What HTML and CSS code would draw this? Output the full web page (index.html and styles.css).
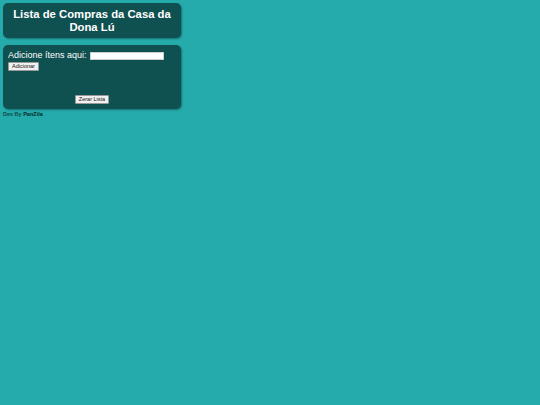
FILE: index.html
```html
<!DOCTYPE html>
<html lang="pt-BR">
<head>
<meta charset="utf-8">
<title>Lista de Compras</title>
<link rel="stylesheet" href="styles.css">
</head>
<body>
<header class="card header">
  <h1 class="title">Lista de Compras da Casa da Dona Lú</h1>
</header>
<main class="card panel">
  <div class="add-row">
    <label class="label" for="item">Adicione ítens aqui:</label>
    <input class="field" id="item" type="text">
  </div>
  <button class="btn">Adicionar</button>
  <ul class="list"></ul>
  <div class="reset-row"><button class="btn">Zerar Lista</button></div>
</main>
<footer class="footer">Dev By <strong class="author">PanZila</strong></footer>
</body>
</html>
```
FILE: styles.css
```css
html, body { margin: 0; padding: 0; }
body {
  background: #25abab;
  font-family: "Liberation Sans", Arial, sans-serif;
  padding: 3px;
  width: 178px;
}
.card {
  background: #0f5050;
  border-radius: 5px;
  box-shadow: 1px 1px 2px rgba(0,0,0,0.35);
  color: #fff;
}
.header { height: 35px; display: flex; align-items: center; justify-content: center; }
.title {
  margin: 0;
  font-size: 11.3px;
  line-height: 13px;
  font-weight: bold;
  text-align: center;
  padding: 0 2px;
}
.panel {
  margin-top: 7px;
  height: 64px;
  padding: 4px 5px 0;
  box-sizing: border-box;
  display: flex;
  flex-direction: column;
  align-items: flex-start;
}
.add-row { display: flex; align-items: center; gap: 3px; }
.label { font-size: 9px; line-height: 12px; white-space: nowrap; flex: none; }
.field {
  flex: none;
  width: 74px; height: 8px; box-sizing: border-box;
  border: 1px solid #ccc; padding: 0; margin: 1px 0 0; background: #fff;
}
.btn {
  font-family: "Liberation Sans", Arial, sans-serif;
  font-size: 5.5px;
  line-height: 7px;
  padding: 0 3px;
  height: 9px;
  background: #f0f0f0;
  border: 1px solid #999;
  border-radius: 1px;
  color: #111;
  margin: 1px 0 0;
}
.list { margin: 0; padding: 0; flex: 1; }
.reset-row { align-self: stretch; display: flex; justify-content: center; padding-bottom: 5px; }
.footer {
  margin-top: 2px;
  font-size: 5.5px;
  font-weight: bold;
  color: #0f4a4a;
}
.author { color: #032626; }
```
